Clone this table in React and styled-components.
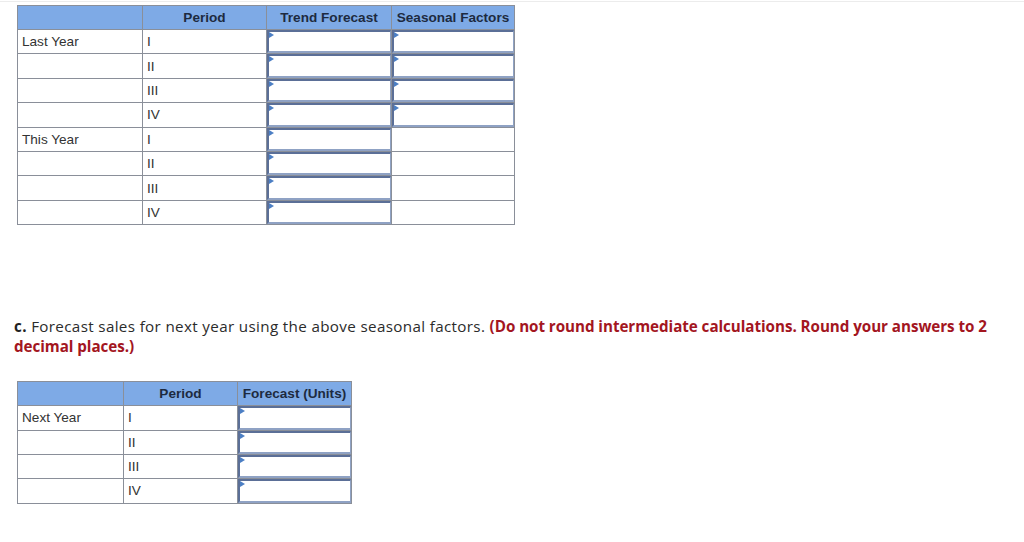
import React from "react";
import styled, { createGlobalStyle } from "styled-components";

const GlobalStyle = createGlobalStyle`
  html, body {
    margin: 0;
    padding: 0;
    background: #fff;
  }
  body {
    font-family: "Liberation Sans", Arial, sans-serif;
  }
`;

const Page = styled.div`
  border-top: 1px solid #ececec;
  margin-top: 1px;
  padding: 3px 0 0 0;
`;

const Table = styled.table`
  border-collapse: collapse;
  margin-left: 17px;
  table-layout: fixed;
  font-family: "Liberation Sans", Arial, sans-serif;
  font-size: 13.6px;
  color: #333;
`;

const HeadCell = styled.th`
  width: ${(p) => p.w}px;
  height: 24px;
  box-sizing: border-box;
  background: #7eaae6;
  border: 1px solid #8a8f99;
  color: #1d2a40;
  font-weight: bold;
  text-align: center;
  padding: 0 3px;
  white-space: nowrap;
`;

const Row = styled.tr`
  height: 24.4px;
`;

const Cell = styled.td`
  border: 1px solid #8a8f99;
  padding: 0 4px;
  box-sizing: border-box;
  vertical-align: middle;
  white-space: nowrap;
`;

const InputCell = styled.td`
  border: 1px solid #8a8f99;
  padding: 0;
  position: relative;
  box-sizing: border-box;
`;

const InputBox = styled.div`
  position: absolute;
  inset: 0 0 0 0;
  box-sizing: border-box;
  border-top: 2px solid #5b6f97;
  border-left: 2px solid #5b6f97;
  border-right: 1px solid #8fa2c4;
  border-bottom: 2px solid #8fa2c4;
  background: #fff;

  &::before {
    content: "";
    position: absolute;
    left: 0;
    top: 0;
    border-top: 3px solid transparent;
    border-bottom: 3px solid transparent;
    border-left: 5px solid #4c7fc4;
  }
`;

const Prompt = styled.p`
  margin: 91px 14px 0 14px;
  font-family: "Open Sans", Lato, sans-serif;
  font-size: 15.2px;
  line-height: 20px;
  letter-spacing: 0.35px;
  color: #2b2b2b;
`;

const Strong = styled.b`
  color: #222;
`;

const Warn = styled.b`
  color: #a3161f;
  letter-spacing: -0.05px;
`;

const SecondTable = styled(Table)`
  margin-top: 25px;
`;

const quarters = ["I", "II", "III", "IV"];

export default function App() {
  return (
    <>
      <GlobalStyle />
      <Page>
        <Table>
          <thead>
            <tr>
              <HeadCell w={125} />
              <HeadCell w={124}>Period</HeadCell>
              <HeadCell w={125}>Trend Forecast</HeadCell>
              <HeadCell w={123}>Seasonal Factors</HeadCell>
            </tr>
          </thead>
          <tbody>
            {quarters.map((q, i) => (
              <Row key={"l" + q}>
                <Cell>{i === 0 ? "Last Year" : ""}</Cell>
                <Cell>{q}</Cell>
                <InputCell>
                  <InputBox />
                </InputCell>
                <InputCell>
                  <InputBox />
                </InputCell>
              </Row>
            ))}
            {quarters.map((q, i) => (
              <Row key={"t" + q}>
                <Cell>{i === 0 ? "This Year" : ""}</Cell>
                <Cell>{q}</Cell>
                <InputCell>
                  <InputBox />
                </InputCell>
                <Cell />
              </Row>
            ))}
          </tbody>
        </Table>

        <Prompt>
          <Strong>c.</Strong> Forecast sales for next year using the above seasonal factors.{" "}
          <Warn>(Do not round intermediate calculations. Round your answers to 2 decimal places.)</Warn>
        </Prompt>

        <SecondTable>
          <thead>
            <tr>
              <HeadCell w={106} />
              <HeadCell w={114}>Period</HeadCell>
              <HeadCell w={114}>Forecast (Units)</HeadCell>
            </tr>
          </thead>
          <tbody>
            {quarters.map((q, i) => (
              <Row key={"n" + q}>
                <Cell>{i === 0 ? "Next Year" : ""}</Cell>
                <Cell>{q}</Cell>
                <InputCell>
                  <InputBox />
                </InputCell>
              </Row>
            ))}
          </tbody>
        </SecondTable>
      </Page>
    </>
  );
}
